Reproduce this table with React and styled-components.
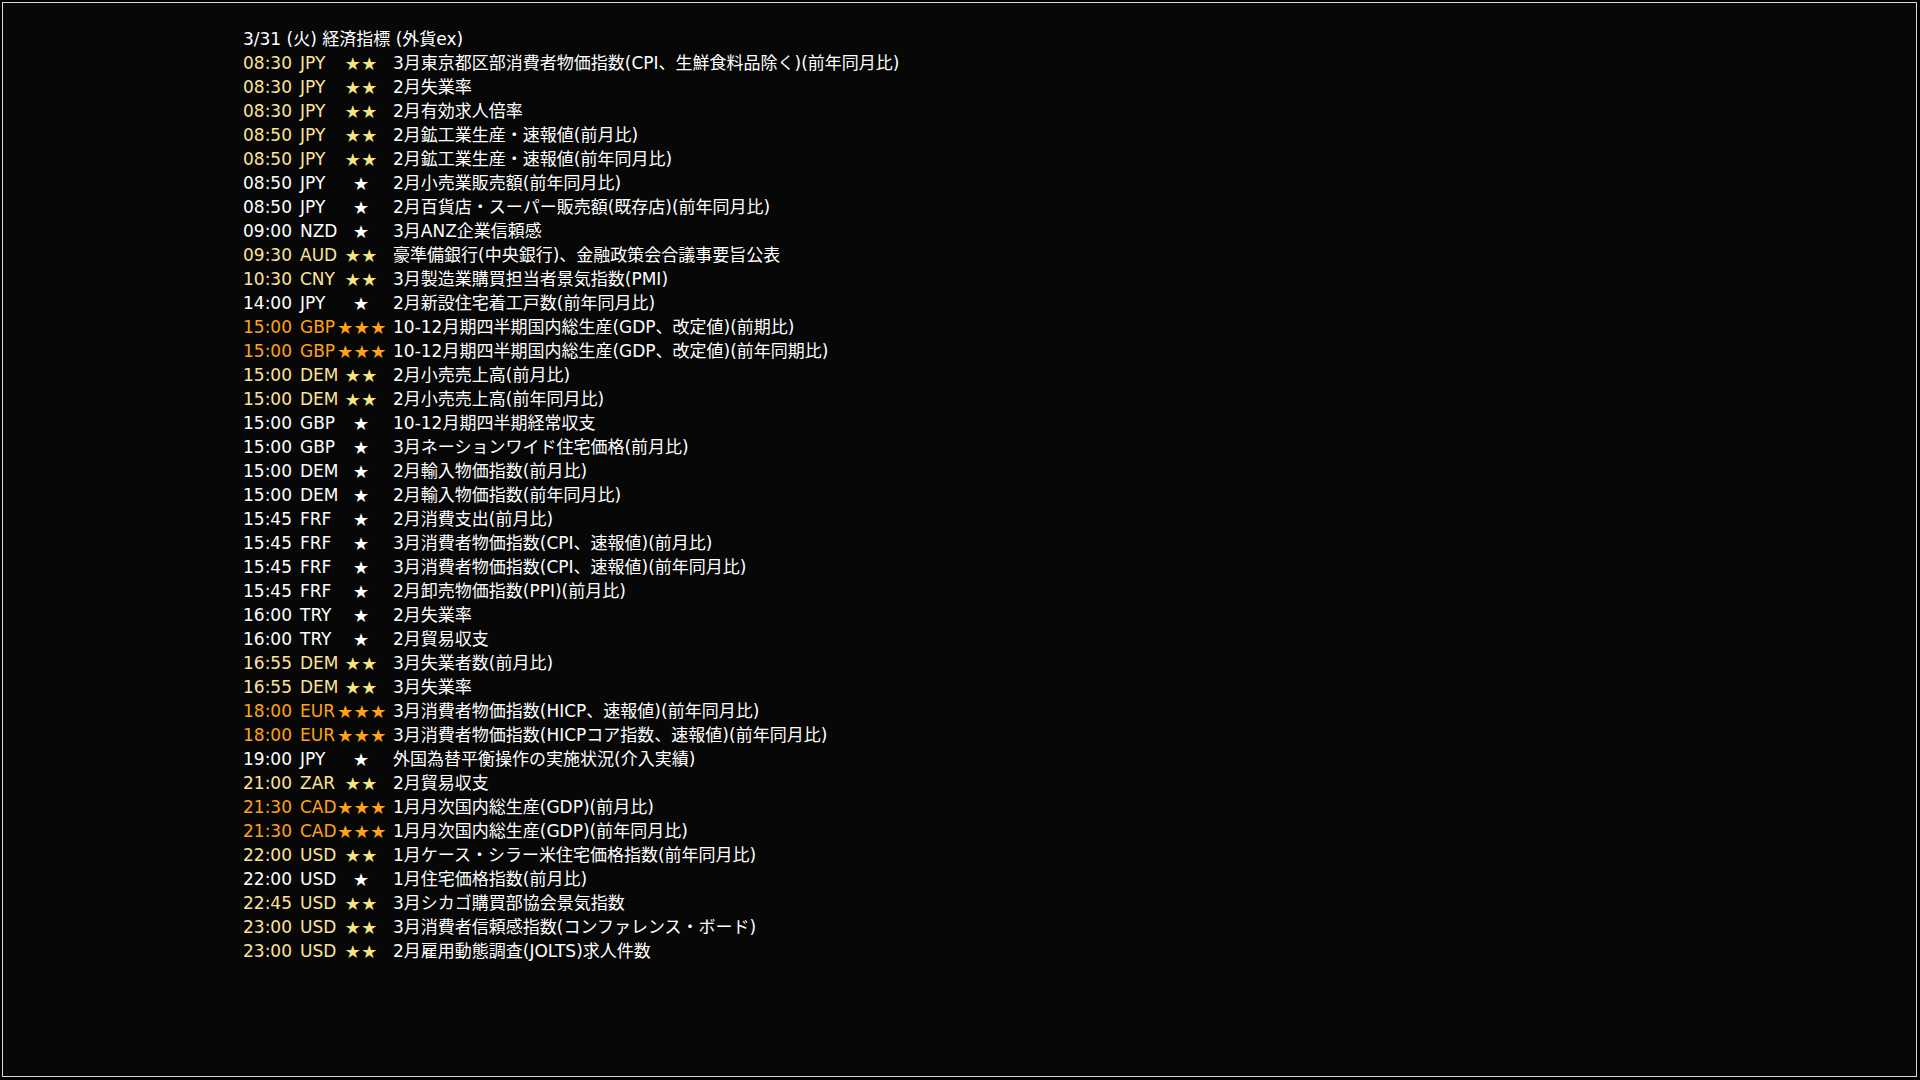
import React from "react";
import styled, { createGlobalStyle } from "styled-components";

const Global = createGlobalStyle`
  html, body { margin: 0; padding: 0; background: #000; }
  body { font-family: "DejaVu Sans", "Noto Sans CJK JP", sans-serif; }
`;

const Screen = styled.div`
  box-sizing: border-box;
  width: 100vw;
  height: 100vh;
  padding: 2px 3px 3px 2px;
  background: #000;
`;

const Frame = styled.div`
  box-sizing: border-box;
  height: 100%;
  border: 1px solid #d9d9d9;
  background: #070707;
  padding: 24px 0 0 240px;
  color: #fff;
  font-size: 17px;
  line-height: 24px;
`;

const Title = styled.div`
  height: 24px;
  white-space: nowrap;
`;

const Row = styled.div`
  display: grid;
  grid-template-columns: 57px 38px 48px auto;
  height: 24px;
  white-space: nowrap;
  color: ${(p) => (p.$level === 3 ? "#ffa216" : p.$level === 2 ? "#fde497" : "#ffffff")};
`;

const Cell = styled.span``;

const Stars = styled.span`
  text-align: center;
  font-family: "Noto Sans CJK JP", sans-serif;
  font-size: 14.5px;
  letter-spacing: 2px;
  color: ${(p) => (p.$level === 3 ? "#ffa216" : p.$level === 2 ? "#f6e27e" : "#ffffff")};
`;

const Desc = styled.span`
  color: #fff;
  padding-left: 7px;
`;

const data = [
  ["08:30", "JPY", 2, "3月東京都区部消費者物価指数(CPI、生鮮食料品除く)(前年同月比)"],
  ["08:30", "JPY", 2, "2月失業率"],
  ["08:30", "JPY", 2, "2月有効求人倍率"],
  ["08:50", "JPY", 2, "2月鉱工業生産・速報値(前月比)"],
  ["08:50", "JPY", 2, "2月鉱工業生産・速報値(前年同月比)"],
  ["08:50", "JPY", 1, "2月小売業販売額(前年同月比)"],
  ["08:50", "JPY", 1, "2月百貨店・スーパー販売額(既存店)(前年同月比)"],
  ["09:00", "NZD", 1, "3月ANZ企業信頼感"],
  ["09:30", "AUD", 2, "豪準備銀行(中央銀行)、金融政策会合議事要旨公表"],
  ["10:30", "CNY", 2, "3月製造業購買担当者景気指数(PMI)"],
  ["14:00", "JPY", 1, "2月新設住宅着工戸数(前年同月比)"],
  ["15:00", "GBP", 3, "10-12月期四半期国内総生産(GDP、改定値)(前期比)"],
  ["15:00", "GBP", 3, "10-12月期四半期国内総生産(GDP、改定値)(前年同期比)"],
  ["15:00", "DEM", 2, "2月小売売上高(前月比)"],
  ["15:00", "DEM", 2, "2月小売売上高(前年同月比)"],
  ["15:00", "GBP", 1, "10-12月期四半期経常収支"],
  ["15:00", "GBP", 1, "3月ネーションワイド住宅価格(前月比)"],
  ["15:00", "DEM", 1, "2月輸入物価指数(前月比)"],
  ["15:00", "DEM", 1, "2月輸入物価指数(前年同月比)"],
  ["15:45", "FRF", 1, "2月消費支出(前月比)"],
  ["15:45", "FRF", 1, "3月消費者物価指数(CPI、速報値)(前月比)"],
  ["15:45", "FRF", 1, "3月消費者物価指数(CPI、速報値)(前年同月比)"],
  ["15:45", "FRF", 1, "2月卸売物価指数(PPI)(前月比)"],
  ["16:00", "TRY", 1, "2月失業率"],
  ["16:00", "TRY", 1, "2月貿易収支"],
  ["16:55", "DEM", 2, "3月失業者数(前月比)"],
  ["16:55", "DEM", 2, "3月失業率"],
  ["18:00", "EUR", 3, "3月消費者物価指数(HICP、速報値)(前年同月比)"],
  ["18:00", "EUR", 3, "3月消費者物価指数(HICPコア指数、速報値)(前年同月比)"],
  ["19:00", "JPY", 1, "外国為替平衡操作の実施状況(介入実績)"],
  ["21:00", "ZAR", 2, "2月貿易収支"],
  ["21:30", "CAD", 3, "1月月次国内総生産(GDP)(前月比)"],
  ["21:30", "CAD", 3, "1月月次国内総生産(GDP)(前年同月比)"],
  ["22:00", "USD", 2, "1月ケース・シラー米住宅価格指数(前年同月比)"],
  ["22:00", "USD", 1, "1月住宅価格指数(前月比)"],
  ["22:45", "USD", 2, "3月シカゴ購買部協会景気指数"],
  ["23:00", "USD", 2, "3月消費者信頼感指数(コンファレンス・ボード)"],
  ["23:00", "USD", 2, "2月雇用動態調査(JOLTS)求人件数"],
];

export default function App() {
  return (
    <>
      <Global />
      <Screen>
        <Frame>
          <Title>3/31 (火) 経済指標 (外貨ex)</Title>
          {data.map(([time, cur, level, text], i) => (
            <Row key={i} $level={level}>
              <Cell>{time}</Cell>
              <Cell>{cur}</Cell>
              <Stars $level={level}>{"★".repeat(level)}</Stars>
              <Desc>{text}</Desc>
            </Row>
          ))}
        </Frame>
      </Screen>
    </>
  );
}
